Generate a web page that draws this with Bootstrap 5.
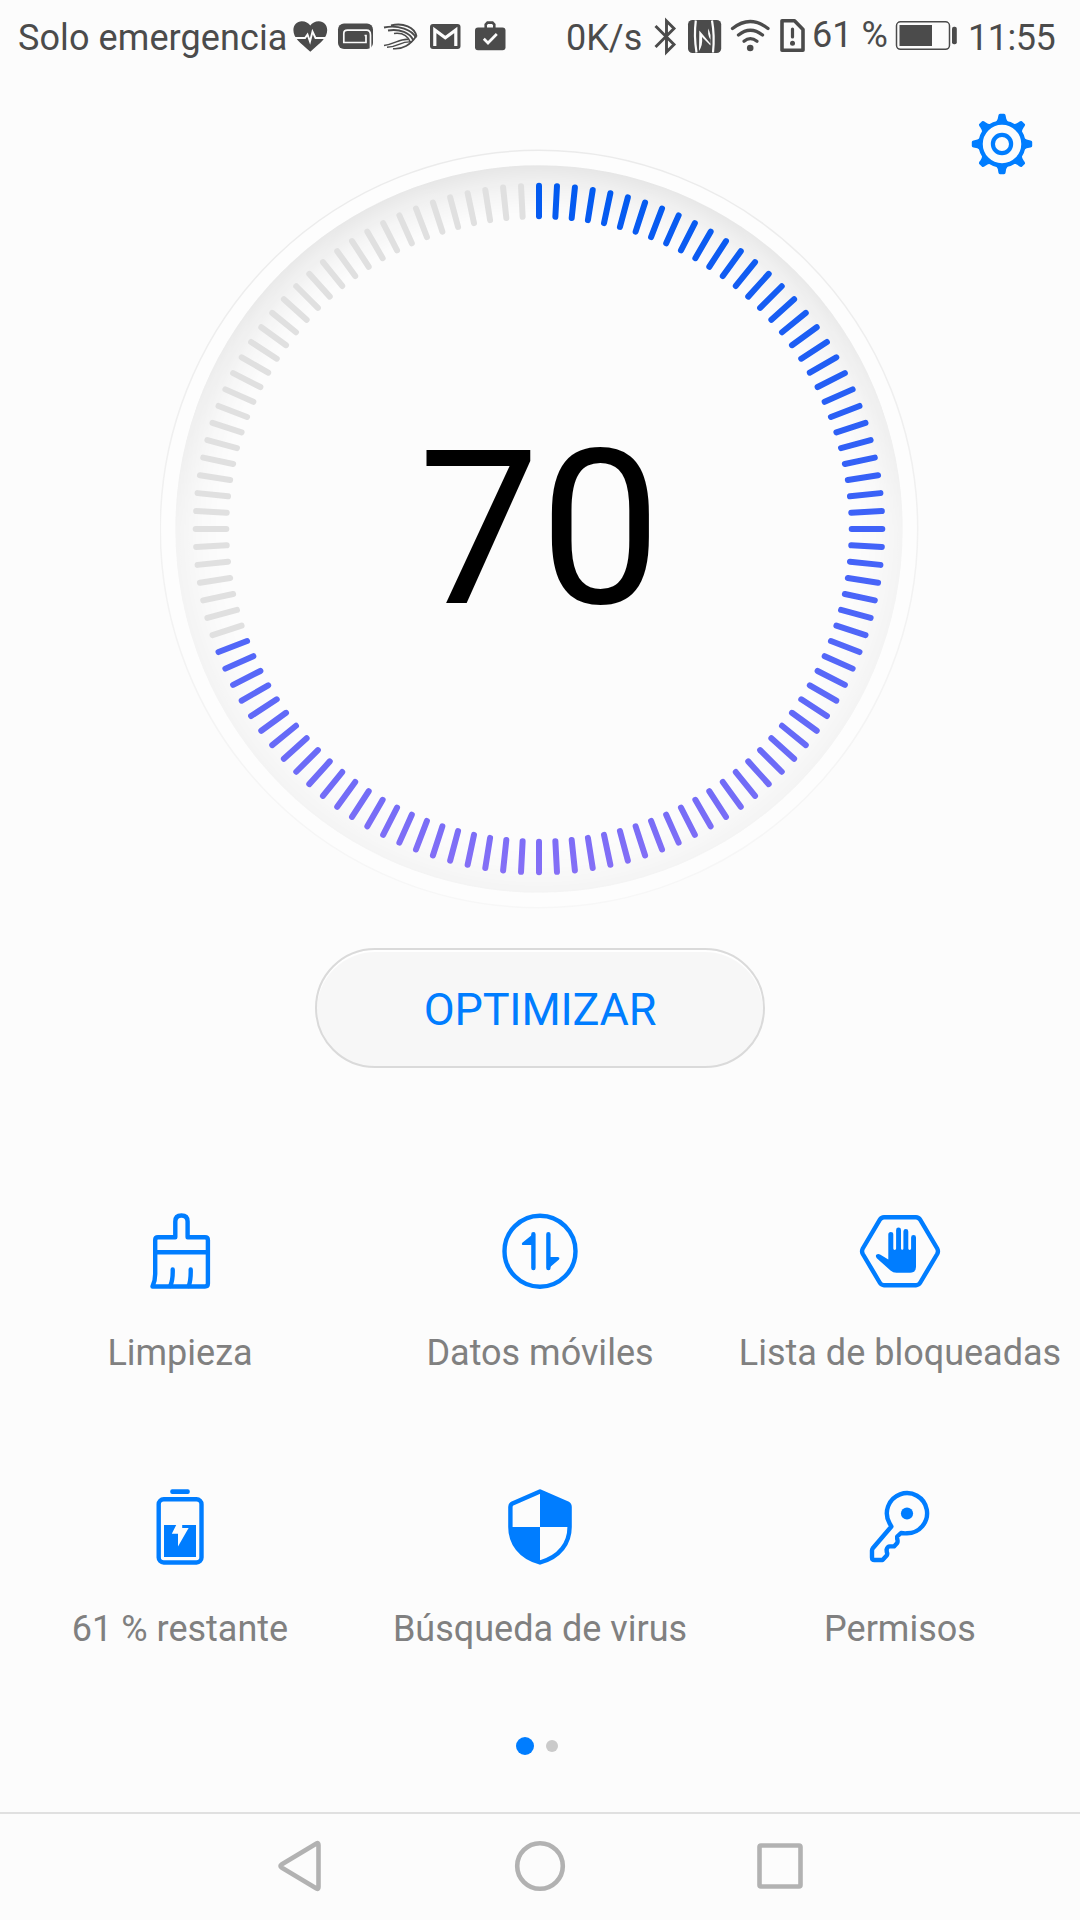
<!DOCTYPE html>
<html lang="es">
<head>
<meta charset="utf-8">
<meta name="viewport" content="width=device-width, initial-scale=1">
<title>Optimizador</title>
<link href="https://cdn.jsdelivr.net/npm/bootstrap@5.3.0/dist/css/bootstrap.min.css" rel="stylesheet">
<style>
  body { background: #fcfcfc; font-family: Roboto, "Noto Sans", sans-serif; color: #4b4b4b; overflow: hidden; }
  svg { display: block; flex: none; }
  .screen { width: 1080px; height: 1920px; }
  .statusbar { height: 75px; padding: 0 2px 0 18px; font-size: 36px; line-height: 77px; white-space: nowrap; }
  .carrier { width: 274px; letter-spacing: .09px; }
  .net-speed { width: 84px; }
  .charge { width: 80px; line-height: 70px; }
  .clock { width: 114px; padding-left: 4px; letter-spacing: -.5px; }
  .topbar { height: 105px; padding: 35px 44px 0 0; }
  .gauge { margin-top: -31px; }
  .score { font-size: 216px; fill: #000; }
  .optimize { width: 450px; height: 120px; margin-top: 39px; padding: 3px 0 0; font-size: 45px; line-height: 113px;
    letter-spacing: -.2px; color: #007dff; background: #f7f7f7; border: 2px solid #dadada; box-shadow: inset 0 2px 1px #fff; }
  .features { margin-top: 141px; }
  .feature-label { margin-top: 36px; font-size: 36px; line-height: 48px; color: #808080; white-space: nowrap; }
  .second-row { margin-top: 108px; }
  .pager { height: 18px; margin-top: 84px; padding-right: 6px; gap: 12px; }
  .dot-on { width: 18px; height: 18px; background: #007dff; }
  .dot-off { width: 12px; height: 12px; background: #cacaca; }
  .softkeys { height: 108px; margin-top: 57px; border-top: 2px solid #e0e0e0; gap: 180px; }
  .ln { fill: none; stroke: #007dff; stroke-width: 4.4; stroke-linecap: round; stroke-linejoin: round; }
  .fl { fill: #007dff; }
  .sk { fill: none; stroke: #b2b2b2; stroke-width: 4.6; stroke-linejoin: round; }
  .dk { fill: #4b4b4b; }
</style>
<script src="https://cdn.jsdelivr.net/npm/bootstrap@5.3.0/dist/js/bootstrap.bundle.min.js"></script>
</head>
<body>
<div class="screen d-flex flex-column">

  <div class="statusbar d-flex">
    <span class="carrier">Solo emergencia</span>
    <svg width="40" height="75" viewBox="292 0 40 75">
      <path class="dk" d="M310.3 51.8 C300 42.500 293.400 38 293.400 30 C293.400 25 297 21.300 301.800 21.300 C305.500 21.300 308.500 23 310.300 25.500 C312.100 23 315.100 21.300 318.800 21.300 C323.600 21.300 327.200 25 327.200 30 C327.200 38 320.600 42.500 310.300 51.800Z"/>
      <path d="M292 38H305L307.500 34.500L310 41.500L312.500 31.500L315.500 38H329" fill="none" stroke="#fcfcfc" stroke-width="1.900"/>
    </svg>
    <svg width="46" height="75" viewBox="332 0 46 75">
      <rect class="dk" x="338" y="23.500" width="35" height="25.500" rx="6"/>
      <path d="M370.500 48.500V35Q370.500 30.200 366.500 30.200H347.500Q343.800 30.200 343.800 33.500V42.500H366V35.500H351" fill="none" stroke="#fcfcfc" stroke-width="1.700"/>
      <path class="dk" d="M351 34H364.500V37H351Z"/>
    </svg>
    <svg width="46" height="75" viewBox="378 0 46 75" fill="none" stroke="#4b4b4b" stroke-width="1.900">
      <path d="M391 25.500C403 22.500 415 27 416.500 36.500"/>
      <path d="M384 27.500C398 24.500 413 30 415.800 38"/>
      <path d="M388 30.500C400 28.500 410 33 413.500 40.500"/>
      <path d="M394 33.500C402 32.500 408 36 410.500 42.500" stroke-width="1.500"/>
      <path d="M384 45.500C395 44 401 38 408.500 39.500" stroke-width="1.600"/>
      <path d="M387 47.200C400 46.500 401 40.500 412 42" stroke-width="1.400"/>
      <path d="M393 48.700C402 49.500 411 45 416.500 35.500" stroke-width="1.600"/>
    </svg>
    <svg width="44" height="75" viewBox="424 0 44 75">
      <rect class="dk" x="430" y="24" width="30.500" height="25" rx="3"/>
      <path d="M434.800 46V30L445.300 37.800L455.800 30V46" fill="none" stroke="#fcfcfc" stroke-width="3.200"/>
    </svg>
    <svg width="44" height="75" viewBox="468 0 44 75">
      <rect class="dk" x="475" y="27.500" width="30.500" height="22.700" rx="3"/>
      <path d="M485.700 29V24.500L487.500 22.600H492.500L494.300 24.500V29" fill="none" stroke="#4b4b4b" stroke-width="2.600"/>
      <path d="M483.800 38.800L488 43L496.800 34" fill="none" stroke="#fcfcfc" stroke-width="2.700"/>
    </svg>

    <div class="d-flex ms-auto">
      <span class="net-speed">0K/s</span>
      <svg width="32" height="75" viewBox="650 0 32 75">
        <path d="M655.500 26L674 44.500L666.500 52V21L674 28.500L655.500 47" fill="none" stroke="#4b4b4b" stroke-width="2.900"/>
      </svg>
      <svg width="44" height="75" viewBox="682 0 44 75">
        <rect class="dk" x="688" y="20" width="33.200" height="33" rx="4.500"/>
        <path d="M695.800 20.500Q693.800 36 696.500 52.500M712 20.500Q714.800 36 713 52.500" fill="none" stroke="#fcfcfc" stroke-width="2.200"/>
        <path d="M699.300 30.500L710.300 43.500V39.500Q707 34 708.500 28.500L710.500 35V45.500L702 37Q703 45 699 51Z" fill="#fcfcfc"/>
      </svg>
      <svg width="48" height="75" viewBox="726 0 48 75" fill="none" stroke="#4b4b4b" stroke-width="3.300" stroke-linecap="round">
        <path d="M732.500 28.500Q750.200 14.500 768 28.500"/>
        <path d="M738.500 35Q750.200 25.500 762.500 35"/>
        <path d="M744 41.200Q750.200 36 757 41.200"/>
        <circle class="dk" cx="750.200" cy="48" r="3.300" stroke="none"/>
      </svg>
      <svg width="38" height="75" viewBox="774 0 38 75">
        <path d="M782 20.800H794.500L803 29.500V50.200H782Z" fill="none" stroke="#4b4b4b" stroke-width="3.600" stroke-linejoin="round"/>
        <path d="M792.500 29V37" stroke="#4b4b4b" stroke-width="3.200" stroke-linecap="round"/>
        <circle class="dk" cx="792.500" cy="43.300" r="2.500"/>
      </svg>
      <span class="charge">61 %</span>
      <svg width="72" height="75" viewBox="892 0 72 75">
        <rect x="896.500" y="21.800" width="53" height="27.500" rx="4" fill="none" stroke="#4b4b4b" stroke-width="1.500"/>
        <path class="dk" d="M899.500 25H932V46H899.500Z"/>
        <rect class="dk" x="952" y="26.700" width="4.800" height="17.600" rx="2"/>
      </svg>
      <span class="clock">11:55</span>
    </div>
  </div>

  <div class="topbar d-flex justify-content-end">
    <svg width="68" height="68" viewBox="-34 -34 68 68">
      <g class="fl" id="teeth"></g>
      <circle r="21.400" fill="none" stroke="#007dff" stroke-width="4.300"/>
      <circle r="9.100" fill="none" stroke="#007dff" stroke-width="4.200"/>
    </svg>
  </div>

  <div class="gauge d-flex justify-content-center">
    <svg width="760" height="760" viewBox="160 149 760 760">
      <defs>
        <radialGradient id="rim" gradientUnits="userSpaceOnUse" cx="539" cy="529" r="363.700">
          <stop offset=".860" stop-color="#000" stop-opacity="0"/>
          <stop offset=".930" stop-color="#000" stop-opacity=".035"/>
          <stop offset="1" stop-color="#000" stop-opacity=".092"/>
        </radialGradient>
        <linearGradient id="fade" gradientUnits="userSpaceOnUse" x1="0" y1="165" x2="0" y2="893">
          <stop offset="0" stop-color="#fff"/>
          <stop offset=".200" stop-color="#d8d8d8"/>
          <stop offset=".500" stop-color="#686868"/>
          <stop offset="1" stop-color="#606060"/>
        </linearGradient>
        <mask id="fadeMask" maskUnits="userSpaceOnUse" x="160" y="149" width="760" height="760" style="color-interpolation: sRGB">
          <rect x="160" y="149" width="760" height="760" fill="url(#fade)"/>
        </mask>
        <linearGradient id="edge" x1="0" y1="0" x2="0" y2="1">
          <stop offset="0" stop-color="#ebebeb"/>
          <stop offset="1" stop-color="#f7f7f7"/>
        </linearGradient>
        <linearGradient id="level" gradientUnits="userSpaceOnUse" x1="0" y1="182" x2="0" y2="876">
          <stop offset="0" stop-color="#005af0"/>
          <stop offset=".500" stop-color="#4062f8"/>
          <stop offset=".680" stop-color="#5367f8"/>
          <stop offset="1" stop-color="#866ff6"/>
        </linearGradient>
      </defs>
      <circle cx="539" cy="529" r="378.700" fill="#fdfdfd" stroke="url(#edge)" stroke-width="1.500"/>
      <circle cx="539" cy="529" r="363.700" fill="#fcfcfc"/>
      <circle cx="539" cy="529" r="363.700" fill="url(#rim)" mask="url(#fadeMask)" opacity=".92"/>
      <g id="ticks" stroke-width="6" stroke-linecap="round"></g>
      <text class="score" x="539.700" y="603" text-anchor="middle">70</text>
    </svg>
  </div>

  <button type="button" class="btn optimize rounded-pill align-self-center">OPTIMIZAR</button>

  <div class="features row g-0 text-center">
    <div class="col-4 d-flex flex-column align-items-center">
      <svg width="84" height="84" viewBox="138 1209 84 84" class="ln">
        <path d="M175.300 1237.300V1221.500Q175.300 1215.500 181.400 1215.500Q187.600 1215.500 187.600 1221.500V1237.300H205Q207.900 1237.300 207.900 1240V1283.500Q207.900 1286.500 205 1286.500H152.500Q155.200 1281 155.200 1274V1240Q155.200 1237.300 158 1237.300Z"/>
        <path d="M155.200 1252.300H207.900M172.700 1269.500Q173 1280 170.300 1286M190.700 1269.500Q191 1280 188.700 1286"/>
      </svg>
      <div class="feature-label">Limpieza</div>
    </div>
    <div class="col-4 d-flex flex-column align-items-center">
      <svg width="84" height="84" viewBox="498 1209 84 84">
        <circle class="ln" cx="540" cy="1251.200" r="35.500"/>
        <path class="ln" d="M533.400 1234.300V1268M548.400 1234.300V1268"/>
        <path class="fl" d="M535 1232.500L522.300 1242.700Q521 1245 523.500 1245H535ZM547 1269.800L559 1259.500Q560.300 1257 557.500 1257H547Z"/>
      </svg>
      <div class="feature-label">Datos móviles</div>
    </div>
    <div class="col-4 d-flex flex-column align-items-center">
      <svg width="84" height="84" viewBox="858 1209 84 84">
        <path class="ln" d="M884 1217.200H916Q918.700 1217.200 920.300 1219.800L937.200 1248.500Q938.700 1251.200 937.200 1254L920.300 1282.500Q918.700 1285.200 916 1285.200H884Q881.300 1285.200 879.700 1282.500L862.800 1254Q861.300 1251.200 862.800 1248.500L879.700 1219.800Q881.300 1217.200 884 1217.200Z"/>
        <path class="fl" d="M888.300 1259.500V1234.500a2.500 2.500 0 0 1 5 0V1248.500a1.400 1.400 0 0 0 2.800 0V1230a2.450 2.450 0 0 1 4.900 0V1248.500a1.200 1.200 0 0 0 2.400 0V1231.500a2.450 2.450 0 0 1 4.900 0V1248.500a1.400 1.400 0 0 0 2.800 0V1237.500a2.450 2.450 0 0 1 4.900 0V1267Q916 1272.700 910 1272.700H896.500Q893 1272.700 890.500 1270.500L876.800 1258.200Q875 1256 876.600 1254.500Q878.200 1253.200 880.500 1254.800Z"/>
      </svg>
      <div class="feature-label">Lista de bloqueadas</div>
    </div>
  </div>

  <div class="second-row row g-0 text-center">
    <div class="col-4 d-flex flex-column align-items-center">
      <svg width="84" height="84" viewBox="138 1485 84 84">
        <rect class="fl" x="170.200" y="1489.300" width="19.600" height="4.700" rx="2"/>
        <rect class="ln" x="158.700" y="1499.300" width="42.800" height="63.200" rx="5"/>
        <path class="fl" d="M164 1525H176.200L171.800 1533.700H178V1546.500L188.600 1528H182.200V1525H196V1557H164Z"/>
      </svg>
      <div class="feature-label">61 % restante</div>
    </div>
    <div class="col-4 d-flex flex-column align-items-center">
      <svg width="84" height="84" viewBox="498 1485 84 84">
        <path class="ln" d="M540 1491.400L567.500 1503.400Q569.600 1504.500 569.600 1507V1527C569.600 1543 560 1557 540 1562.500C520 1557 510.400 1543 510.400 1527V1507Q510.400 1504.500 512.500 1503.400Z"/>
        <path class="fl" d="M540 1490L569 1503V1527H540ZM510.400 1527H540V1562.500C520 1557 510.400 1543 510.400 1527Z"/>
      </svg>
      <div class="feature-label">Búsqueda de virus</div>
    </div>
    <div class="col-4 d-flex flex-column align-items-center">
      <svg width="84" height="84" viewBox="858 1485 84 84">
        <path class="ln" d="M901 1533Q904 1533.500 907 1533.300A20.100 20.100 0 1 0 889.600 1523.300L891.400 1526.500L872.800 1548.200Q872 1549.300 872 1550.500V1557.500Q872 1560 874.500 1560H882.500L886.700 1555.500Q887.700 1554 886.800 1552L886.600 1549.500Q887.500 1546.300 890 1546.400H894L897.200 1543Q898 1541 897.200 1539V1536.500Z"/>
        <circle class="fl" cx="907" cy="1513.500" r="6.100"/>
      </svg>
      <div class="feature-label">Permisos</div>
    </div>
  </div>

  <div class="pager d-flex justify-content-center align-items-center">
    <span class="dot-on rounded-circle"></span>
    <span class="dot-off rounded-circle"></span>
  </div>

  <div class="softkeys d-flex justify-content-center">
    <svg width="60" height="106" viewBox="270 1814 60 106"><path class="sk" d="M316.500 1843.500Q318.500 1842.300 318.500 1845V1887Q318.500 1889.700 316.500 1888.500L281.500 1867.500Q279.500 1866 281.500 1864.500Z"/></svg>
    <svg width="60" height="106" viewBox="510 1814 60 106"><circle class="sk" cx="540" cy="1866" r="22.800"/></svg>
    <svg width="60" height="106" viewBox="750 1814 60 106"><rect class="sk" x="759.500" y="1845.500" width="41" height="41" rx="1.500"/></svg>
  </div>
</div>

<script>
  const NS = 'http://www.w3.org/2000/svg';
  const score = 70, total = 120, cx = 539, cy = 529, inner = 312.7, outer = 343.3;
  const ticks = document.getElementById('ticks');
  for (let i = 0; i < total; i++) {
    const a = i * 2 * Math.PI / total, s = Math.sin(a), c = Math.cos(a);
    const l = document.createElementNS(NS, 'path');
    l.setAttribute('d', `M${cx + inner * s} ${cy - inner * c}L${cx + outer * s} ${cy - outer * c}`);
    l.setAttribute('stroke', i < score / 100 * total ? 'url(#level)' : '#e0e0e0');
    ticks.appendChild(l);
  }
  // eight gear teeth, the diagonal ones slightly shorter
  const teeth = document.getElementById('teeth');
  for (let i = 0; i < 8; i++) {
    const t = document.createElementNS(NS, 'path');
    const r = i % 2 ? 1.5 : 0;
    t.setAttribute('d', `M-6 -22Q-4 -24 -3.600 ${-28.5 + r}Q-3.400 -30.200 -2 -30.200H2Q3.400 -30.200 3.600 ${-28.5 + r}Q4 -24 6 -22Z`);
    t.setAttribute('transform', `rotate(${i * 45})`);
    teeth.appendChild(t);
  }
</script>
</body>
</html>
